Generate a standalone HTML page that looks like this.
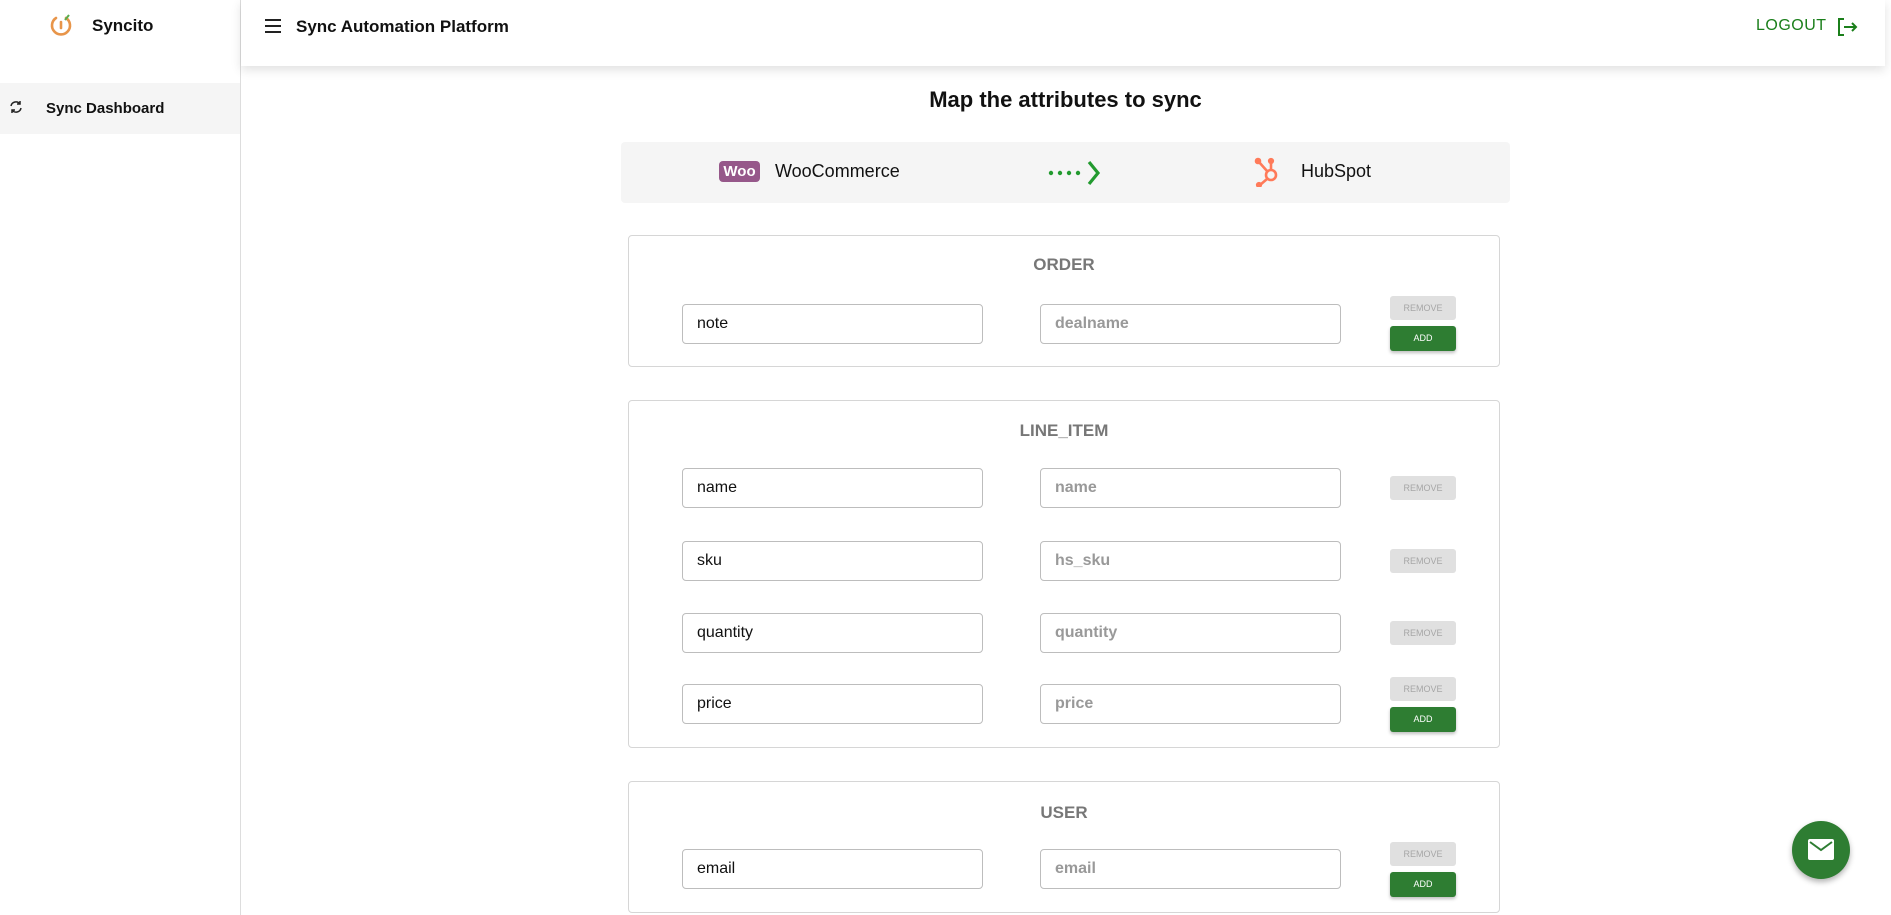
<!DOCTYPE html>
<html><head><meta charset="utf-8"><style>
*{box-sizing:border-box;margin:0;padding:0}
body{width:1891px;height:915px;overflow:hidden;background:#fff;font-family:"Liberation Sans",Arial,sans-serif;position:relative;color:#111}
.abs{position:absolute}
.side{left:0;top:0;width:241px;height:915px;border-right:1px solid #ddd;background:#fff}
.hdr{left:241px;top:0;width:1644px;height:66px;background:#fff;box-shadow:0 4px 10px rgba(0,0,0,.12);z-index:2}
.card{left:628px;width:872px;border:1px solid #d6d6d6;border-radius:4px;background:#fff}
.ct{position:absolute;left:0;right:0;text-align:center;font-weight:bold;font-size:17px;color:#777}
.inp{position:absolute;width:301px;height:40px;border:1px solid #bdbdbd;border-radius:4px;font-size:16px;line-height:38px;padding-left:14px}
.ph{color:#999;font-weight:bold}
.rm{position:absolute;left:761px;width:66px;height:24px;background:#e0e0e0;color:#a6a6a6;font-size:9px;text-align:center;line-height:24px;border-radius:3px}
.ad{position:absolute;left:761px;width:66px;height:25px;background:#2e7d32;color:#fff;font-size:9px;text-align:center;line-height:25px;border-radius:3px;box-shadow:0 2px 3px rgba(0,0,0,.25)}
</style></head><body>
<div class="abs side">
  <svg class="abs" style="left:48px;top:13px" width="26" height="26" viewBox="0 0 26 26"><path d="M8 5 A9 9 0 1 0 18 5" fill="none" stroke="#e8954a" stroke-width="2.6" stroke-linecap="round"/><line x1="13" y1="9" x2="13" y2="15" stroke="#e8954a" stroke-width="2.6" stroke-linecap="round"/><path d="M17 7 L21 2" stroke="#5aad4e" stroke-width="2"/></svg>
  <div class="abs" style="left:92px;top:16px;font-size:17px;font-weight:bold">Syncito</div>
  <div class="abs" style="left:0;top:83px;width:240px;height:51px;background:#f5f5f5"></div>
  <svg class="abs" style="left:8px;top:99px" width="16" height="16" viewBox="0 0 16 16" fill="none" stroke="#222" stroke-width="1.5"><path d="M3 7a5 5 0 0 1 9-2M13 9a5 5 0 0 1-9 2"/><path d="M12 2v3h-3M4 14v-3h3"/></svg>
  <div class="abs" style="left:46px;top:100px;font-size:15px;font-weight:bold">Sync Dashboard</div>
</div>
<div class="abs hdr">
  <div class="abs" style="left:24px;top:19px;width:16px;height:2px;background:#222;box-shadow:0 6px 0 #222,0 12px 0 #222"></div>
  <div class="abs" style="left:55px;top:17px;font-size:17px;font-weight:bold">Sync Automation Platform</div>
  <div class="abs" style="left:1515px;top:17px;font-size:16px;color:#1b7f1b;letter-spacing:.5px">LOGOUT</div>
  <svg class="abs" style="left:1596px;top:17px" width="22" height="20" viewBox="0 0 22 20" fill="none" stroke="#1b7f1b" stroke-width="2"><path d="M7 2H2v16h5"/><path d="M7 10h12M15 6l4 4-4 4"/></svg>
</div>
<div class="abs" style="left:240px;width:1651px;top:87px;text-align:center;font-size:22px;font-weight:bold">Map the attributes to sync</div>
<div class="abs" style="left:621px;top:142px;width:889px;height:61px;background:#f5f5f5;border-radius:4px">
  <div class="abs" style="left:98px;top:19px;width:41px;height:21px;background:#96588a;border-radius:4px;color:#fff;font-weight:bold;font-size:15px;text-align:center;line-height:21px">Woo</div>
  <div class="abs" style="left:154px;top:19px;font-size:18px">WooCommerce</div>
  <svg class="abs" style="left:426px;top:16px" width="64" height="30" viewBox="0 0 64 30"><g fill="#229a2f"><circle cx="4" cy="15" r="2.2"/><circle cx="13" cy="15" r="2.2"/><circle cx="22" cy="15" r="2.2"/><circle cx="31" cy="15" r="2.2"/></g><path d="M42 4l9 11-9 11" fill="none" stroke="#229a2f" stroke-width="3.2"/></svg>
  <svg class="abs" style="left:633px;top:15px" width="28" height="30" viewBox="0 0 28 30" fill="none" stroke="#ff7a59" stroke-width="2.6"><circle cx="17" cy="18" r="5"/><path d="M17 13V6M5 5l8 9M13 22l-7 6"/><circle cx="17" cy="4" r="1.8" fill="#ff7a59"/><circle cx="4" cy="4" r="2" fill="#ff7a59"/><circle cx="5" cy="28" r="1.8" fill="#ff7a59"/></svg>
  <div class="abs" style="left:680px;top:19px;font-size:18px">HubSpot</div>
</div>

<div class="abs card" style="top:235px;height:132px">
  <div class="ct" style="top:19px">ORDER</div>
  <div class="inp" style="left:53px;top:68px">note</div>
  <div class="inp ph" style="left:411px;top:68px">dealname</div>
  <div class="rm" style="top:60px">REMOVE</div>
  <div class="ad" style="top:90px">ADD</div>
</div>

<div class="abs card" style="top:400px;height:348px">
  <div class="ct" style="top:20px">LINE_ITEM</div>
  <div class="inp" style="left:53px;top:67px">name</div>
  <div class="inp ph" style="left:411px;top:67px">name</div>
  <div class="rm" style="top:75px">REMOVE</div>
  <div class="inp" style="left:53px;top:140px">sku</div>
  <div class="inp ph" style="left:411px;top:140px">hs_sku</div>
  <div class="rm" style="top:148px">REMOVE</div>
  <div class="inp" style="left:53px;top:212px">quantity</div>
  <div class="inp ph" style="left:411px;top:212px">quantity</div>
  <div class="rm" style="top:220px">REMOVE</div>
  <div class="inp" style="left:53px;top:283px">price</div>
  <div class="inp ph" style="left:411px;top:283px">price</div>
  <div class="rm" style="top:276px">REMOVE</div>
  <div class="ad" style="top:306px">ADD</div>
</div>

<div class="abs card" style="top:781px;height:132px">
  <div class="ct" style="top:21px">USER</div>
  <div class="inp" style="left:53px;top:67px">email</div>
  <div class="inp ph" style="left:411px;top:67px">email</div>
  <div class="rm" style="top:60px">REMOVE</div>
  <div class="ad" style="top:90px">ADD</div>
</div>

<div class="abs" style="left:1792px;top:821px;width:58px;height:58px;border-radius:50%;background:#2e7d32;box-shadow:0 3px 6px rgba(0,0,0,.3)">
  <svg class="abs" style="left:16px;top:18px" width="26" height="21" viewBox="0 0 26 21"><rect x="0" y="0" width="26" height="21" rx="2" fill="#fff"/><path d="M2 3l11 8 11-8" fill="none" stroke="#2e7d32" stroke-width="2"/></svg>
</div>
</body></html>
